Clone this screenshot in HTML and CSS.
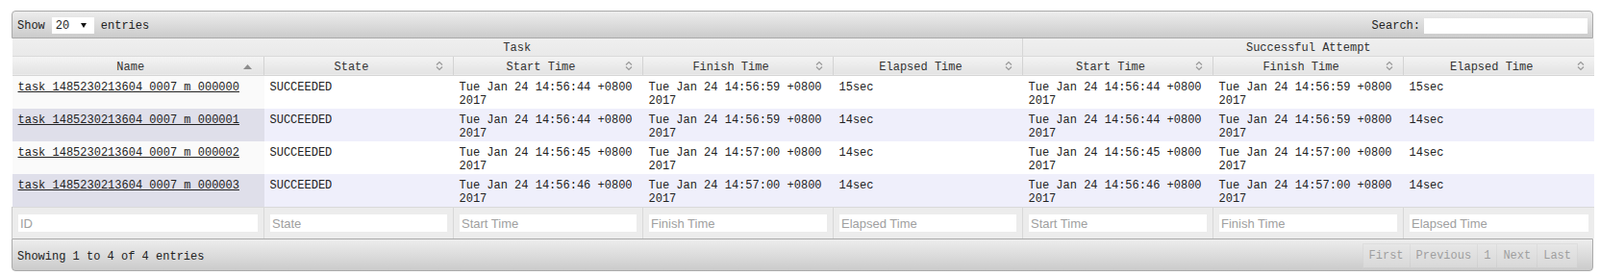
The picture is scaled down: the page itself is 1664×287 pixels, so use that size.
FILE: index.html
```html
<!DOCTYPE html>
<html lang="en">
<head>
    <meta charset="UTF-8">
    <title>Tasks</title>
    <link rel="stylesheet" href="styles.css">
</head>
<body>
    <div class="dt-wrapper">
        <!-- top toolbar -->
        <div class="toolbar toolbar-top">
            <div class="length">
                Show
                <span class="select-wrap">
                    <select name="length">
                        <option>20</option>
                        <option>40</option>
                        <option>60</option>
                    </select>
                </span>
                entries
            </div>
            <div class="search">
                <label for="search">Search:</label>
                <input type="text" id="search">
            </div>
        </div>

        <table class="display">
            <colgroup>
                <col style="width:262px">
                <col style="width:197px">
                <col style="width:197px">
                <col style="width:198px">
                <col style="width:197px">
                <col style="width:198px">
                <col style="width:198px">
                <col style="width:198px">
            </colgroup>
            <thead>
                <tr class="group-row">
                    <th colspan="5" class="group-task">Task</th>
                    <th colspan="3">Successful Attempt</th>
                </tr>
                <tr class="col-row">
                    <th class="sort-asc">Name
                        <svg class="sort-icon" width="9" height="5" viewBox="0 0 9 5"><path d="M0 5 L4.5 0 L9 5 Z" fill="#8c8c8c"/></svg>
                    </th>
                    <th>State<svg class="sort-icon" width="8" height="11" viewBox="0 0 8 11"><path d="M1 4.5 L4 1.5 L7 4.5 M1 6.5 L4 9.5 L7 6.5" fill="none" stroke="#999" stroke-width="1.2"/></svg></th>
                    <th>Start Time<svg class="sort-icon" width="8" height="11" viewBox="0 0 8 11"><path d="M1 4.5 L4 1.5 L7 4.5 M1 6.5 L4 9.5 L7 6.5" fill="none" stroke="#999" stroke-width="1.2"/></svg></th>
                    <th>Finish Time<svg class="sort-icon" width="8" height="11" viewBox="0 0 8 11"><path d="M1 4.5 L4 1.5 L7 4.5 M1 6.5 L4 9.5 L7 6.5" fill="none" stroke="#999" stroke-width="1.2"/></svg></th>
                    <th class="group-end">Elapsed Time<svg class="sort-icon" width="8" height="11" viewBox="0 0 8 11"><path d="M1 4.5 L4 1.5 L7 4.5 M1 6.5 L4 9.5 L7 6.5" fill="none" stroke="#999" stroke-width="1.2"/></svg></th>
                    <th>Start Time<svg class="sort-icon" width="8" height="11" viewBox="0 0 8 11"><path d="M1 4.5 L4 1.5 L7 4.5 M1 6.5 L4 9.5 L7 6.5" fill="none" stroke="#999" stroke-width="1.2"/></svg></th>
                    <th>Finish Time<svg class="sort-icon" width="8" height="11" viewBox="0 0 8 11"><path d="M1 4.5 L4 1.5 L7 4.5 M1 6.5 L4 9.5 L7 6.5" fill="none" stroke="#999" stroke-width="1.2"/></svg></th>
                    <th>Elapsed Time<svg class="sort-icon" width="8" height="11" viewBox="0 0 8 11"><path d="M1 4.5 L4 1.5 L7 4.5 M1 6.5 L4 9.5 L7 6.5" fill="none" stroke="#999" stroke-width="1.2"/></svg></th>
                </tr>
            </thead>
            <tbody>
                <tr class="even">
                    <td class="sorting_1"><a href="#">task_1485230213604_0007_m_000000</a></td>
                    <td>SUCCEEDED</td>
                    <td>Tue Jan 24 14:56:44 +0800 2017</td>
                    <td>Tue Jan 24 14:56:59 +0800 2017</td>
                    <td>15sec</td>
                    <td>Tue Jan 24 14:56:44 +0800 2017</td>
                    <td>Tue Jan 24 14:56:59 +0800 2017</td>
                    <td>15sec</td>
                </tr>
                <tr class="odd">
                    <td class="sorting_1"><a href="#">task_1485230213604_0007_m_000001</a></td>
                    <td>SUCCEEDED</td>
                    <td>Tue Jan 24 14:56:44 +0800 2017</td>
                    <td>Tue Jan 24 14:56:59 +0800 2017</td>
                    <td>14sec</td>
                    <td>Tue Jan 24 14:56:44 +0800 2017</td>
                    <td>Tue Jan 24 14:56:59 +0800 2017</td>
                    <td>14sec</td>
                </tr>
                <tr class="even">
                    <td class="sorting_1"><a href="#">task_1485230213604_0007_m_000002</a></td>
                    <td>SUCCEEDED</td>
                    <td>Tue Jan 24 14:56:45 +0800 2017</td>
                    <td>Tue Jan 24 14:57:00 +0800 2017</td>
                    <td>14sec</td>
                    <td>Tue Jan 24 14:56:45 +0800 2017</td>
                    <td>Tue Jan 24 14:57:00 +0800 2017</td>
                    <td>14sec</td>
                </tr>
                <tr class="odd">
                    <td class="sorting_1"><a href="#">task_1485230213604_0007_m_000003</a></td>
                    <td>SUCCEEDED</td>
                    <td>Tue Jan 24 14:56:46 +0800 2017</td>
                    <td>Tue Jan 24 14:57:00 +0800 2017</td>
                    <td>14sec</td>
                    <td>Tue Jan 24 14:56:46 +0800 2017</td>
                    <td>Tue Jan 24 14:57:00 +0800 2017</td>
                    <td>14sec</td>
                </tr>
            </tbody>
            <tfoot>
                <tr class="filter-row">
                    <th><input type="text" placeholder="ID"></th>
                    <th><input type="text" placeholder="State"></th>
                    <th><input type="text" placeholder="Start Time"></th>
                    <th><input type="text" placeholder="Finish Time"></th>
                    <th><input type="text" placeholder="Elapsed Time"></th>
                    <th><input type="text" placeholder="Start Time"></th>
                    <th><input type="text" placeholder="Finish Time"></th>
                    <th><input type="text" placeholder="Elapsed Time"></th>
                </tr>
            </tfoot>
        </table>

        <!-- bottom toolbar -->
        <div class="toolbar toolbar-bottom">
            <div class="info">Showing 1 to 4 of 4 entries</div>
            <div class="paging">
                <span class="pg-btn">First</span>
                <span class="pg-btn">Previous</span>
                <span class="pg-btn">1</span>
                <span class="pg-btn">Next</span>
                <span class="pg-btn">Last</span>
            </div>
        </div>
    </div>
</body>
</html>
```

FILE: styles.css
```css
/* General Styling */
body {
    margin: 0;
    padding: 0;
    background: #fff;
    font-family: 'Liberation Mono', 'Courier New', monospace;
    font-size: 12px;
    color: #222;
}

.dt-wrapper {
    width: 1645px;
    margin: 11px 0 0 12px;
}

/* toolbars (jquery ui header look) */
.toolbar {
    display: flex;
    justify-content: space-between;
    align-items: center;
    box-sizing: border-box;
    border: 1px solid #aaa;
    background: linear-gradient(to bottom, #ededed 0%, #dcdcdc 50%, #cbcbcb 100%);
    padding: 0 5px;
}

.toolbar-top {
    height: 29px;
    padding-top: 2px;
    border-radius: 4px 4px 0 0;
}

.toolbar-bottom {
    height: 34px;
    padding-top: 3px;
    border-radius: 0 0 4px 4px;
}

.length {
    display: flex;
    align-items: center;
    gap: 7px;
}

.select-wrap {
    position: relative;
    display: inline-block;
}

.select-wrap select {
    appearance: none;
    -webkit-appearance: none;
    width: 44px;
    height: 17px;
    border: none;
    background: #fff;
    font-family: inherit;
    font-size: 12px;
    padding: 0 0 0 4px;
    color: #222;
}

.select-wrap::after {
    content: "";
    position: absolute;
    right: 8px;
    top: 6px;
    border-left: 3px solid transparent;
    border-right: 3px solid transparent;
    border-top: 5px solid #111;
    pointer-events: none;
}

.search {
    display: flex;
    align-items: center;
    gap: 4px;
}

.search input {
    width: 170px;
    height: 16px;
    box-sizing: border-box;
    border: none;
    background: #fff;
    padding: 0 3px;
}

/* table */
table.display {
    width: 1645px;
    table-layout: fixed;
    border-collapse: collapse;
}

thead th {
    font-weight: normal;
    color: #333;
    padding: 0;
}

.group-row th {
    height: 18px;
    padding-top: 2px;
    box-sizing: border-box;
    background: linear-gradient(to bottom, #efefef, #e9e9e9);
    border-bottom: 1px solid #dadada;
    text-align: center;
}

.group-row .group-task {
    border-right: 1px solid #d6d6d6;
}

.col-row th {
    position: relative;
    height: 20px;
    box-sizing: border-box;
    padding: 3px 21px 0 6px;
    background: linear-gradient(to bottom, #f4f4f4 0%, #ebebeb 50%, #e3e3e3 100%);
    border-left: 1px solid #d3d3d3;
    border-bottom: 1px solid #d6d6d6;
    text-align: center;
    white-space: nowrap;
}

.col-row th:first-child {
    border-left: none;
}

.sort-icon {
    position: absolute;
    right: 10px;
    top: 4px;
}

.sort-asc .sort-icon {
    right: 12px;
    top: 8px;
}

tbody td {
    height: 28px;
    padding: 5px 6px 1px;
    line-height: 14px;
    vertical-align: top;
}

tbody a {
    color: #222;
    text-decoration: underline;
}

tr.even td {
    background: #fff;
}

tr.even td.sorting_1 {
    background: #fafafa;
}

tr.odd td {
    background: #efeffb;
}

tr.odd td.sorting_1 {
    background: #dfdfea;
}

/* column filters */
.filter-row th {
    height: 33px;
    padding: 1px 6px 0;
    background: #ececec;
    border-left: 1px solid #d8d8d8;
    border-top: 1px solid #dadada;
    box-sizing: border-box;
}

.filter-row th:first-child {
    border-left: 1px solid #c8c8c8;
}

.filter-row input {
    width: 100%;
    height: 18px;
    box-sizing: border-box;
    border: none;
    background: #fff;
    padding: 0 2px;
    font-family: 'Liberation Sans', Arial, sans-serif;
    font-size: 13px;
}

.filter-row input::placeholder {
    color: #a0a0a0;
}

/* paging */
.paging {
    display: flex;
    margin-right: 10px;
    margin-top: -2px;
    opacity: 0.45;
}

.pg-btn {
    padding: 5px 6px;
    color: #555;
    background: #e6e6e6;
    border: 1px solid #d3d3d3;
    margin-left: -1px;
}
```
